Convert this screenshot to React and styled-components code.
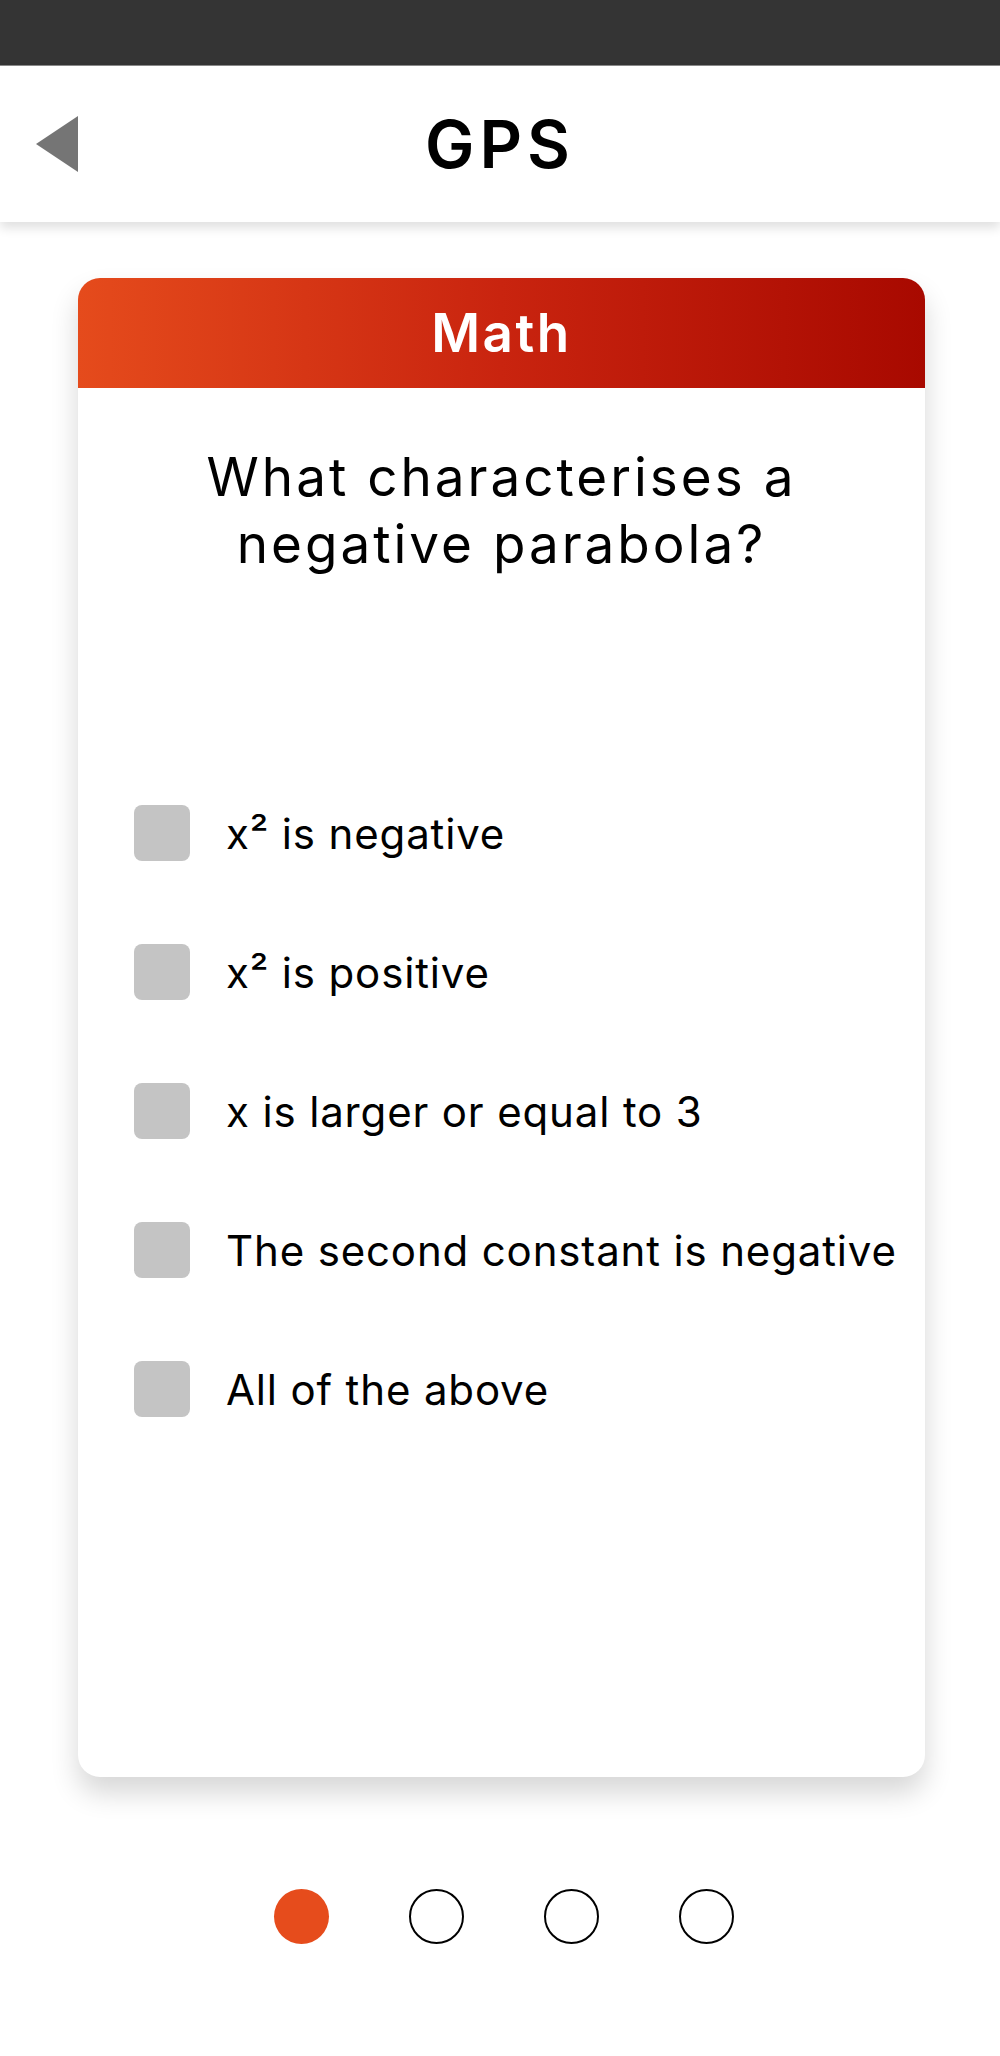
import React, { useState } from 'react';
import styled, { createGlobalStyle } from 'styled-components';

const GlobalStyle = createGlobalStyle`
  body {
    margin: 0;
    background: #ffffff;
    font-family: Inter, 'Open Sans', sans-serif;
    color: #000000;
  }
`;

const Page = styled.div`
  width: 1000px;
  min-height: 2056px;
  background: #ffffff;
`;

const StatusBar = styled.div`
  height: 65px;
  background: #343434;
  border-bottom: 1px solid #8a8a8a;
`;

const Header = styled.header`
  height: 156px;
  display: grid;
  grid-template-columns: 120px 1fr 120px;
  align-items: center;
  background: #ffffff;
  box-shadow: 0 6px 10px rgba(0, 0, 0, 0.12);
`;

const BackButton = styled.button`
  width: 80px;
  height: 60px;
  padding: 0 0 0 36px;
  border: none;
  background: none;
  cursor: pointer;
  display: flex;
  align-items: center;
`;

const Title = styled.h1`
  margin: 0;
  text-align: center;
  font-size: 66px;
  font-weight: 600;
  letter-spacing: 5px;
`;

const Main = styled.main`
  padding: 56px 0 0 3px;
  display: flex;
  flex-direction: column;
  align-items: center;
`;

const Card = styled.section`
  width: 847px;
  height: 1499px;
  border-radius: 22px;
  background: #ffffff;
  box-shadow: 0 16px 28px rgba(0, 0, 0, 0.16);
  overflow: hidden;
`;

const CardHeader = styled.div`
  height: 110px;
  display: flex;
  align-items: center;
  justify-content: center;
  background: linear-gradient(90deg, #e54b1c 0%, #c9240f 50%, #a80900 100%);
  color: #ffffff;
  font-size: 53px;
  font-weight: 600;
  letter-spacing: 2.5px;
`;

const Question = styled.h2`
  margin: 56px 20px 0;
  text-align: center;
  font-size: 53px;
  line-height: 67px;
  font-weight: 400;
  letter-spacing: 3px;
`;

const Options = styled.ul`
  list-style: none;
  margin: 227px 0 0;
  padding: 0 0 0 56px;
  display: flex;
  flex-direction: column;
  gap: 83px;
`;

const Option = styled.li`
  display: flex;
  align-items: center;
  gap: 36px;
  height: 56px;
  cursor: pointer;
  font-size: 42px;
  font-weight: 400;
  letter-spacing: 0.85px;
  white-space: nowrap;
`;

const Box = styled.span`
  flex: none;
  width: 56px;
  height: 56px;
  border-radius: 8px;
  background: ${(p) => (p.$checked ? '#e54b1c' : '#c4c4c4')};
`;

const Dots = styled.nav`
  margin-top: 112px;
  display: flex;
  justify-content: center;
  gap: 80px;
  padding-left: 4px;
`;

const Dot = styled.span`
  width: 55px;
  height: 55px;
  box-sizing: border-box;
  border-radius: 50%;
  background: ${(p) => (p.$active ? '#e64c1c' : 'transparent')};
  border: ${(p) => (p.$active ? 'none' : '2.5px solid #000000')};
`;

const options = [
  <>x² is negative</>,
  <>x² is positive</>,
  <>x is larger or equal to 3</>,
  <>The second constant is negative</>,
  <>All of the above</>,
];

export default function App() {
  const [checked, setChecked] = useState([]);

  const toggle = (i) =>
    setChecked((c) => (c.includes(i) ? c.filter((x) => x !== i) : [...c, i]));

  return (
    <Page>
      <GlobalStyle />
      <StatusBar />
      <Header>
        <BackButton aria-label="Back">
          <svg width="42" height="56" viewBox="0 0 42 56">
            <polygon points="42,0 42,56 0,28" fill="#757575" />
          </svg>
        </BackButton>
        <Title>GPS</Title>
        <span />
      </Header>
      <Main>
        <Card>
          <CardHeader>Math</CardHeader>
          <Question>
            What characterises a<br />
            negative parabola?
          </Question>
          <Options>
            {options.map((label, i) => (
              <Option key={i} onClick={() => toggle(i)}>
                <Box $checked={checked.includes(i)} />
                {label}
              </Option>
            ))}
          </Options>
        </Card>
        <Dots>
          {[0, 1, 2, 3].map((i) => (
            <Dot key={i} $active={i === 0} />
          ))}
        </Dots>
      </Main>
    </Page>
  );
}
